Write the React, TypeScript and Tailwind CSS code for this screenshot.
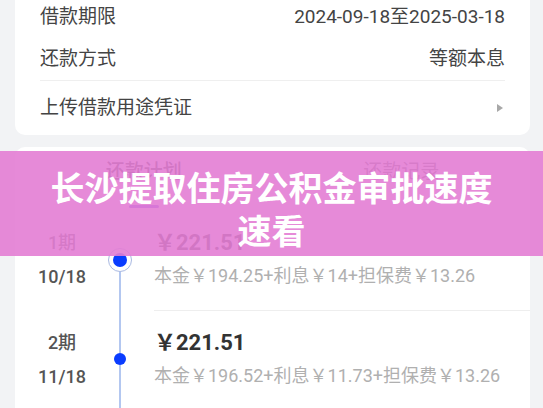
import React from "react";

const font = { fontFamily: 'Roboto, "Noto Sans CJK SC", sans-serif' };

type Period = {
  label: string;
  date: string;
  amount: string;
  detail: string;
  first?: boolean;
};

const periods: Period[] = [
  {
    label: "1期",
    date: "10/18",
    amount: "￥221.51",
    detail: "本金￥194.25+利息￥14+担保费￥13.26",
    first: true,
  },
  {
    label: "2期",
    date: "11/18",
    amount: "￥221.51",
    detail: "本金￥196.52+利息￥11.73+担保费￥13.26",
  },
];

function InfoRow({ label, value, className }: { label: string; value: React.ReactNode; className: string }) {
  return (
    <div className={`flex items-center justify-between px-[25px] text-[19px] text-[#444] ${className}`}>
      <span>{label}</span>
      <span>{value}</span>
    </div>
  );
}

function PeriodItem({ p }: { p: Period }) {
  return (
    <div className="flex h-[100px]">
      {/* Period and date */}
      <div className="w-[94px] flex flex-col items-center pt-[19px] text-[18px] font-medium text-[#555] leading-[26px]">
        <span>{p.label}</span>
        <span className="mt-[8px]">{p.date}</span>
      </div>

      {/* Timeline */}
      <div className="w-[21px] flex flex-col items-center">
        {p.first ? (
          <>
            <div className="h-[37px]" />
            <div className="w-[24px] h-[24px] rounded-full border-[1.5px] border-[#a9b9e2] bg-white flex items-center justify-center">
              <div className="w-[14px] h-[14px] rounded-full bg-[#0a3cff]" />
            </div>
          </>
        ) : (
          <>
            <div className="w-[2px] h-[42px] bg-[#b3c7f0]" />
            <div className="w-[12px] h-[12px] rounded-full bg-[#0a3cff]" />
          </>
        )}
        <div className="w-[2px] flex-1 bg-[#b3c7f0]" />
      </div>

      {/* Amount and breakdown */}
      <div className="flex-1 ml-[24px] border-b border-[#eeeeee] pt-[18px]">
        <div className="text-[22px] font-bold text-[#333] leading-[28px]">{p.amount}</div>
        <div className="mt-[6px] text-[18px] text-[#b0b0b0] leading-[26px]">{p.detail}</div>
      </div>
    </div>
  );
}

export default function App() {
  return (
    <div className="relative w-[543px] h-[408px] overflow-hidden bg-[#f2f3f5]" style={font}>
      {/* Loan info card */}
      <div className="ml-[15px] w-[515px] bg-white rounded-b-[10px]">
        <InfoRow label="借款期限" value="2024-09-18至2025-03-18" className="h-[34px]" />
        <InfoRow label="还款方式" value="等额本息" className="h-[34px] mt-[8px]" />
        <div className="mx-[25px] mt-[4px] h-px bg-[#efefef]" />
        <div className="flex items-center justify-between px-[25px] h-[54px] text-[19px] text-[#444]">
          <span>上传借款用途凭证</span>
          <svg width="6" height="8" viewBox="0 0 6 8" className="mr-[2px]">
            <path d="M0 0 L6 4 L0 8 Z" fill="#a8a8a8" />
          </svg>
        </div>
      </div>

      {/* Repayment plan card */}
      <div className="ml-[15px] mt-[12px] w-[515px] bg-white rounded-t-[10px]">
        <div className="flex pt-[12px]">
          <div className="flex-1 flex flex-col items-center">
            <span className="text-[19px] leading-[26px] font-medium text-[#333]">还款计划</span>
            <div className="mt-[20px] w-[30px] h-[3px] rounded-full bg-[#6b3cf0]" />
          </div>
          <div className="flex-1 flex flex-col items-center">
            <span className="text-[19px] leading-[26px] text-[#666]">还款记录</span>
          </div>
        </div>
        <div className="mt-[3px]">
          {periods.map((p) => (
            <PeriodItem key={p.label} p={p} />
          ))}
        </div>
      </div>

      {/* Title banner over the page */}
      <div
        className="absolute left-0 right-0 top-[151px] h-[105px] bg-[#e37dd4]/90 px-[45px] pt-[14px] text-center text-[34px] leading-[43px] font-bold text-white"
        style={{ fontFamily: '"Noto Sans CJK SC", sans-serif' }}
      >
        长沙提取住房公积金审批速度速看
      </div>
    </div>
  );
}
